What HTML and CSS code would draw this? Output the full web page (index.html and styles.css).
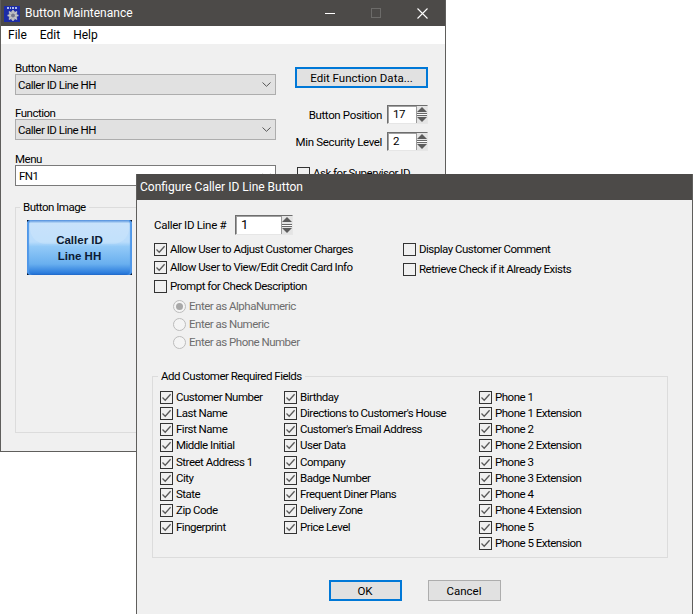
FILE: index.html
```html
<!DOCTYPE html>
<html lang="en">
<head>
<meta charset="utf-8">
<title>Button Maintenance</title>
<link rel="stylesheet" href="styles.css">
</head>
<body>
<svg class="defs" width="0" height="0" aria-hidden="true">
  <symbol id="chk" viewBox="0 0 11 11"><path d="M1.5 5.5 L4.2 8.2 L9.6 2.2" fill="none" stroke="#5a5a5a" stroke-width="1.3"/></symbol>
  <symbol id="chev" viewBox="0 0 9 5"><path d="M0.5 0.5 L4.5 4.3 L8.5 0.5" fill="none" stroke="#555" stroke-width="1"/></symbol>
</svg>

<section class="window main-window">
  <header class="titlebar">
    <svg class="app-icon" width="16" height="16" viewBox="0 0 16 16">
      <rect width="16" height="16" fill="#1c2ca8"/>
      <path d="M3 1h2v2H3zM6 1h1v2H6zM8 1h2v2H8zM11 1h2v2h-2z" fill="#aebbe8"/>
      <circle cx="9" cy="9.500" r="4.500" fill="#a9abb0"/>
      <path d="M9 4v11M3.500 9.500h11M5 5.500l8 8M13 5.500l-8 8" stroke="#c4c5c8" stroke-width="1.500"/>
      <circle cx="9" cy="9.500" r="2" fill="#75788c"/>
    </svg>
    <span class="title-text">Button Maintenance</span>
    <div class="controls">
      <svg width="10" height="10" viewBox="0 0 10 10"><path d="M0 5.500h10" stroke="#fff"/></svg>
      <svg width="10" height="10" viewBox="0 0 10 10"><rect x=".5" y=".5" width="9" height="9" fill="none" stroke="#6c6b69"/></svg>
      <svg width="11" height="11" viewBox="0 0 11 11"><path d="M.5 .5l10 10M10.500 .5l-10 10" stroke="#fff" stroke-width="1.100"/></svg>
    </div>
  </header>
  <nav class="menubar"><span>File</span><span>Edit</span><span>Help</span></nav>
  <div class="main-body">
    <div class="col-left">
      <label class="lbl">Button Name</label>
      <div class="combo"><span>Caller ID Line HH</span><svg width="9" height="5"><use href="#chev"/></svg></div>
      <label class="lbl lbl-gap">Function</label>
      <div class="combo"><span>Caller ID Line HH</span><svg width="9" height="5"><use href="#chev"/></svg></div>
      <label class="lbl lbl-gap2">Menu</label>
      <div class="textbox"><span>FN1</span><svg class="faint" width="9" height="5"><use href="#chev"/></svg></div>
      <fieldset class="group image-group">
        <legend>Button Image</legend>
        <div class="pos-button"><span>Caller ID<br>Line HH</span></div>
      </fieldset>
    </div>
    <div class="col-right">
      <button class="btn btn-default edit-btn">Edit Function Data...</button>
      <div class="spin-row first">
        <span>Button Position</span>
        <div class="spin small"><span class="spin-val">17</span><div class="arrows"><i class="up"></i><i class="down"></i></div></div>
      </div>
      <div class="spin-row second">
        <span>Min Security Level</span>
        <div class="spin small"><span class="spin-val">2</span><div class="arrows"><i class="up"></i><i class="down"></i></div></div>
      </div>
      <div class="check ask"><span class="box"></span><span>Ask for Supervisor ID</span></div>
    </div>
  </div>
</section>

<section class="window dialog">
  <header class="titlebar dlg-title"><span>Configure Caller ID Line Button</span></header>
  <div class="dlg-body">
    <div class="top-block">
      <div class="caller-row">
        <span class="caller-label">Caller ID Line #</span>
        <div class="spin wide"><span class="spin-val big">1</span><div class="arrows"><i class="up"></i><i class="down"></i></div></div>
      </div>
      <div class="opts">
        <div class="opts-left">
          <div class="check"><span class="box"><svg width="11" height="11"><use href="#chk"/></svg></span><span>Allow User to Adjust Customer Charges</span></div>
          <div class="check"><span class="box"><svg width="11" height="11"><use href="#chk"/></svg></span><span>Allow User to View/Edit Credit Card Info</span></div>
          <div class="check"><span class="box"></span><span>Prompt for Check Description</span></div>
          <div class="radio on"><span class="dot"></span><span>Enter as AlphaNumeric</span></div>
          <div class="radio"><span class="dot"></span><span>Enter as Numeric</span></div>
          <div class="radio"><span class="dot"></span><span>Enter as Phone Number</span></div>
        </div>
        <div class="opts-right">
          <div class="check"><span class="box"></span><span>Display Customer Comment</span></div>
          <div class="check"><span class="box"></span><span>Retrieve Check if it Already Exists</span></div>
        </div>
      </div>
    </div>
    <fieldset class="group req-group">
      <legend>Add Customer Required Fields</legend>
      <div class="req-grid" id="req">
        <div class="check"><span class="box"><svg width="11" height="11"><use href="#chk"/></svg></span><span>Customer Number</span></div>
        <div class="check"><span class="box"><svg width="11" height="11"><use href="#chk"/></svg></span><span>Last Name</span></div>
        <div class="check"><span class="box"><svg width="11" height="11"><use href="#chk"/></svg></span><span>First Name</span></div>
        <div class="check"><span class="box"><svg width="11" height="11"><use href="#chk"/></svg></span><span>Middle Initial</span></div>
        <div class="check"><span class="box"><svg width="11" height="11"><use href="#chk"/></svg></span><span>Street Address 1</span></div>
        <div class="check"><span class="box"><svg width="11" height="11"><use href="#chk"/></svg></span><span>City</span></div>
        <div class="check"><span class="box"><svg width="11" height="11"><use href="#chk"/></svg></span><span>State</span></div>
        <div class="check"><span class="box"><svg width="11" height="11"><use href="#chk"/></svg></span><span>Zip Code</span></div>
        <div class="check"><span class="box"><svg width="11" height="11"><use href="#chk"/></svg></span><span>Fingerprint</span></div>
        <div class="spacer"></div>
        <div class="check"><span class="box"><svg width="11" height="11"><use href="#chk"/></svg></span><span>Birthday</span></div>
        <div class="check"><span class="box"><svg width="11" height="11"><use href="#chk"/></svg></span><span>Directions to Customer's House</span></div>
        <div class="check"><span class="box"><svg width="11" height="11"><use href="#chk"/></svg></span><span>Customer's Email Address</span></div>
        <div class="check"><span class="box"><svg width="11" height="11"><use href="#chk"/></svg></span><span>User Data</span></div>
        <div class="check"><span class="box"><svg width="11" height="11"><use href="#chk"/></svg></span><span>Company</span></div>
        <div class="check"><span class="box"><svg width="11" height="11"><use href="#chk"/></svg></span><span>Badge Number</span></div>
        <div class="check"><span class="box"><svg width="11" height="11"><use href="#chk"/></svg></span><span>Frequent Diner Plans</span></div>
        <div class="check"><span class="box"><svg width="11" height="11"><use href="#chk"/></svg></span><span>Delivery Zone</span></div>
        <div class="check"><span class="box"><svg width="11" height="11"><use href="#chk"/></svg></span><span>Price Level</span></div>
        <div class="spacer"></div>
        <div class="check"><span class="box"><svg width="11" height="11"><use href="#chk"/></svg></span><span>Phone 1</span></div>
        <div class="check"><span class="box"><svg width="11" height="11"><use href="#chk"/></svg></span><span>Phone 1 Extension</span></div>
        <div class="check"><span class="box"><svg width="11" height="11"><use href="#chk"/></svg></span><span>Phone 2</span></div>
        <div class="check"><span class="box"><svg width="11" height="11"><use href="#chk"/></svg></span><span>Phone 2 Extension</span></div>
        <div class="check"><span class="box"><svg width="11" height="11"><use href="#chk"/></svg></span><span>Phone 3</span></div>
        <div class="check"><span class="box"><svg width="11" height="11"><use href="#chk"/></svg></span><span>Phone 3 Extension</span></div>
        <div class="check"><span class="box"><svg width="11" height="11"><use href="#chk"/></svg></span><span>Phone 4</span></div>
        <div class="check"><span class="box"><svg width="11" height="11"><use href="#chk"/></svg></span><span>Phone 4 Extension</span></div>
        <div class="check"><span class="box"><svg width="11" height="11"><use href="#chk"/></svg></span><span>Phone 5</span></div>
        <div class="check"><span class="box"><svg width="11" height="11"><use href="#chk"/></svg></span><span>Phone 5 Extension</span></div>
      </div>
    </fieldset>
    <div class="dlg-actions">
      <button class="btn btn-default dlg-btn">OK</button>
      <button class="btn dlg-btn">Cancel</button>
    </div>
  </div>
</section>
</body>
</html>
```
FILE: styles.css
```css
* { box-sizing: border-box; }
html, body { margin: 0; padding: 0; }
body {
  width: 693px;
  height: 614px;
  position: relative;
  overflow: hidden;
  background: #fff;
  color: #000;
  font-family: Roboto, "Liberation Sans", sans-serif;
  font-size: 12px;
  line-height: 14px;
}
.defs { position: absolute; }

.window {
  position: absolute;
  background: #f0f0f0;
  border-left: 1px solid #5f5e5c;
  border-right: 1px solid #5f5e5c;
}
.main-window { left: 0; top: 0; width: 446px; height: 452px; border-bottom: 1px solid #5f5e5c; }
.dialog { left: 136px; top: 174px; width: 557px; height: 440px; }
.main-body, .dlg-body { font-size: 11.5px; letter-spacing: -0.5px; }

.titlebar {
  height: 26px;
  background: #4c4a48;
  color: #fff;
  display: flex;
  align-items: center;
  padding-left: 3px;
}
.app-icon { margin-right: 5px; margin-top: 1px; }
.title-text { flex: 1; }
.controls { display: flex; align-items: center; gap: 36px; padding-right: 17px; }

.menubar {
  height: 18px;
  background: #fff;
  display: flex;
  align-items: center;
  gap: 13px;
  padding-left: 7px;
}

.main-body { display: flex; padding: 16px 0 0 14px; gap: 19px; }
.col-left { width: 261px; display: flex; flex-direction: column; }
.col-right { width: 133px; display: flex; flex-direction: column; padding-top: 7px; }
.lbl { display: block; height: 14px; padding-top: 1px; }
.lbl-gap { margin-top: 10px; }
.lbl-gap2 { margin-top: 11px; }

.combo, .textbox {
  height: 21px;
  display: flex;
  align-items: center;
  justify-content: space-between;
  padding: 0 4px 0 2px;
}
.combo { background: #e1e1e1; border: 1px solid #adadad; }
.textbox { background: #fff; border: 1px solid #7a7a7a; padding-left: 3px; }
.combo svg, .textbox svg { flex: none; }
.faint { opacity: .35; }

.group { border: 1px solid #dcdcdc; margin: 0; min-width: 0; }
.group legend { padding: 0 3px; line-height: 14px; }
.image-group { margin-top: 14px; height: 233px; padding: 6px 0 0 11px; }
.image-group legend { margin-left: -7px; }

.pos-button {
  position: relative;
  width: 105px;
  height: 55px;
  background: #0a1426;
  display: flex;
  align-items: center;
  justify-content: center;
  overflow: hidden;
}
.pos-button::before {
  content: "";
  position: absolute;
  inset: 0;
  border-radius: 4px;
  background: linear-gradient(#2f78d4 0, #bfdefb 6%, #b9dcfb 40%, #93caf7 48%, #69afef 80%, #2a7bdc 97%, #1259bd 100%);
  box-shadow: inset 2px 0 1px #4f97e8, inset -2px 0 1px #4f97e8;
}
.pos-button::after {
  content: "";
  position: absolute;
  left: 3px;
  right: 3px;
  top: -18px;
  height: 42px;
  border-radius: 0 0 16px 16px;
  background: rgba(255, 255, 255, .14);
}
.pos-button span {
  position: relative;
  z-index: 1;
  font-family: "Liberation Sans", Arial, sans-serif;
  font-weight: 700;
  font-size: 11.5px;
  letter-spacing: 0;
  line-height: 16px;
  text-align: center;
  color: #0b1a33;
}

.btn {
  font: inherit;
  color: #000;
  letter-spacing: 0;
  background: #e1e1e1;
  border: 1px solid #adadad;
  padding: 0;
  height: 21px;
}
.btn-default { border: 2px solid #0078d7; }
.edit-btn { width: 133px; }
.dlg-btn { width: 73px; }

.spin-row { display: flex; justify-content: flex-end; align-items: center; gap: 5px; white-space: nowrap; letter-spacing: -0.35px; }
.spin-row.first { margin-top: 17px; }
.spin-row.second { margin-top: 8px; }
.spin {
  display: flex;
  height: 19px;
  background: #fff;
  border: 1px solid;
  border-color: #6e6e6e #e6e6e6 #e6e6e6 #6e6e6e;
  box-shadow: inset 1px 1px 0 #a0a0a0;
}
.spin.small { width: 41px; }
.spin.wide { width: 58px; height: 20px; }
.spin-val { flex: 1; padding-left: 5px; line-height: 17px; }
.spin-val.big { font-size: 13px; }
.arrows { width: 11px; display: flex; flex-direction: column; background: #fff; border-left: 1px solid #9a9a9a; }
.arrows i {
  flex: 1;
  display: flex;
  align-items: center;
  justify-content: center;
  background: #e4e4e4;
}
.arrows .up { border-bottom: 1px solid #6a6a6a; }
.arrows .down { border-top: 1px solid #6a6a6a; margin-top: 1px; }
.arrows i::before {
  content: "";
  border-left: 5px solid transparent;
  border-right: 5px solid transparent;
}
.arrows .up::before { border-bottom: 5px solid #5c5c5c; }
.arrows .down::before { border-top: 5px solid #5c5c5c; }

.check, .radio { display: flex; align-items: center; height: 13px; gap: 3px; white-space: nowrap; }
.check > span + span, .radio > span + span { padding-bottom: 2px; }
.box {
  flex: none;
  width: 13px;
  height: 13px;
  background: #f0f0f0;
  border: 1px solid #333;
  display: block;
}
.box svg { display: block; }
.ask { margin: 16px 0 0 2px; }

.dlg-body { padding: 15px 15px 0; }
.top-block { padding-left: 2px; }
.caller-row { display: flex; align-items: center; height: 20px; }
.caller-label { width: 81px; letter-spacing: -0.3px; }
.opts { display: flex; margin-top: 8px; }
.opts-left {
  width: 249px;
  display: grid;
  grid-template-rows: 18px 19px 20px 18px 18px 18px;
  align-items: start;
}
.opts-right { display: grid; grid-template-rows: 20px 20px; align-items: start; align-content: start; }

.radio { padding-left: 19px; color: #6d6d6d; }
.dot {
  flex: none;
  width: 13px;
  height: 13px;
  border-radius: 50%;
  background: #f4f4f4;
  border: 1px solid #bcbcbc;
  display: flex;
  align-items: center;
  justify-content: center;
}
.radio.on .dot::after {
  content: "";
  width: 7px;
  height: 7px;
  border-radius: 50%;
  background: #a8a8a8;
}

.req-group { margin-top: 15px; width: 516px; height: 189px; padding: 8px 0 0 7px; }
.req-group legend { margin-left: -2px; }
.req-grid {
  display: grid;
  grid-auto-flow: column;
  grid-template-columns: 124px 195px 1fr;
  grid-template-rows: 16px 16px 16px 17px 16px 16px 16px 17px 16px 13px;
  align-items: start;
}
.dlg-actions { display: flex; justify-content: center; gap: 26px; margin-top: 22px; }
```
